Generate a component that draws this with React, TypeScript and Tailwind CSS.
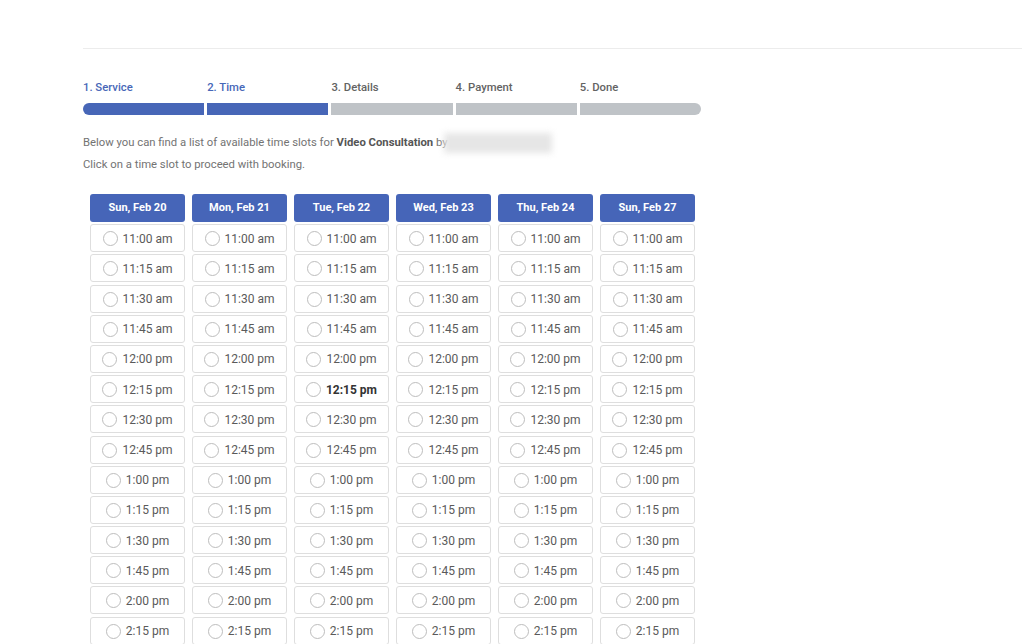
import React from 'react';

const steps = [
  { label: '1. Service', active: true },
  { label: '2. Time', active: true },
  { label: '3. Details', active: false },
  { label: '4. Payment', active: false },
  { label: '5. Done', active: false },
];

const days = ['Sun, Feb 20', 'Mon, Feb 21', 'Tue, Feb 22', 'Wed, Feb 23', 'Thu, Feb 24', 'Sun, Feb 27'];

const times = [
  '11:00 am', '11:15 am', '11:30 am', '11:45 am',
  '12:00 pm', '12:15 pm', '12:30 pm', '12:45 pm',
  '1:00 pm', '1:15 pm', '1:30 pm', '1:45 pm', '2:00 pm', '2:15 pm',
];

function Slot({ time, bold }: { time: string; bold?: boolean }) {
  return (
    <div className="mt-[2.2px] h-[28px] border border-[#dedede] rounded-[3px] bg-white flex items-center justify-center gap-[5px] pt-[1px]">
      <span className="w-[15px] h-[15px] rounded-full border border-[#bdbdbd] bg-white flex-shrink-0" />
      <span className={`text-[12px] ${bold ? 'font-bold text-[#333]' : 'text-[#5a5a5a]'}`}>{time}</span>
    </div>
  );
}

export default function App() {
  return (
    <div className="min-h-[644px] bg-white pt-[48px] pl-[83px] pr-[2px]" style={{ fontFamily: 'Roboto, "Liberation Sans", sans-serif' }}>
      <div className="border-t border-[#ececec]" />

      {/* Progress */}
      <div className="mt-[31px] w-[618px] flex gap-[3px]">
        {steps.map((s, i) => (
          <div key={i} className="flex-1">
            <div className={`text-[11.3px] leading-4 font-medium ${s.active ? 'text-[#4767b8]' : 'text-[#636363]'}`}>{s.label}</div>
            <div
              className={`mt-[7px] h-[12px] ${s.active ? 'bg-[#4766b7]' : 'bg-[#bfc3c7]'} ${i === 0 ? 'rounded-l-[6px]' : ''} ${i === steps.length - 1 ? 'rounded-r-[6px]' : ''}`}
            />
          </div>
        ))}
      </div>

      {/* Intro */}
      <div className="mt-[17px] text-[11.3px] leading-[22px] text-[#737373]">
        <div className="flex items-center">
          <span>
            Below you can find a list of available time slots for <b className="font-bold text-[#555]">Video Consultation</b> by
          </span>
          <span className="ml-[-4px] inline-block w-[108px] h-[20px] bg-[#e6e6e6] blur-[3px]" />
        </div>
        <div>Click on a time slot to proceed with booking.</div>
      </div>

      {/* Slots */}
      <div className="mt-[18px] ml-[7px] flex gap-[7px]">
        {days.map((d, di) => (
          <div key={d} className="w-[95px]">
            <div className="h-[28px] rounded-[3px] bg-[#4665b8] text-white text-[11px] font-bold flex items-center justify-center">
              {d}
            </div>
            {times.map(t => (
              <Slot key={t} time={t} bold={di === 2 && t === '12:15 pm'} />
            ))}
          </div>
        ))}
      </div>
    </div>
  );
}
